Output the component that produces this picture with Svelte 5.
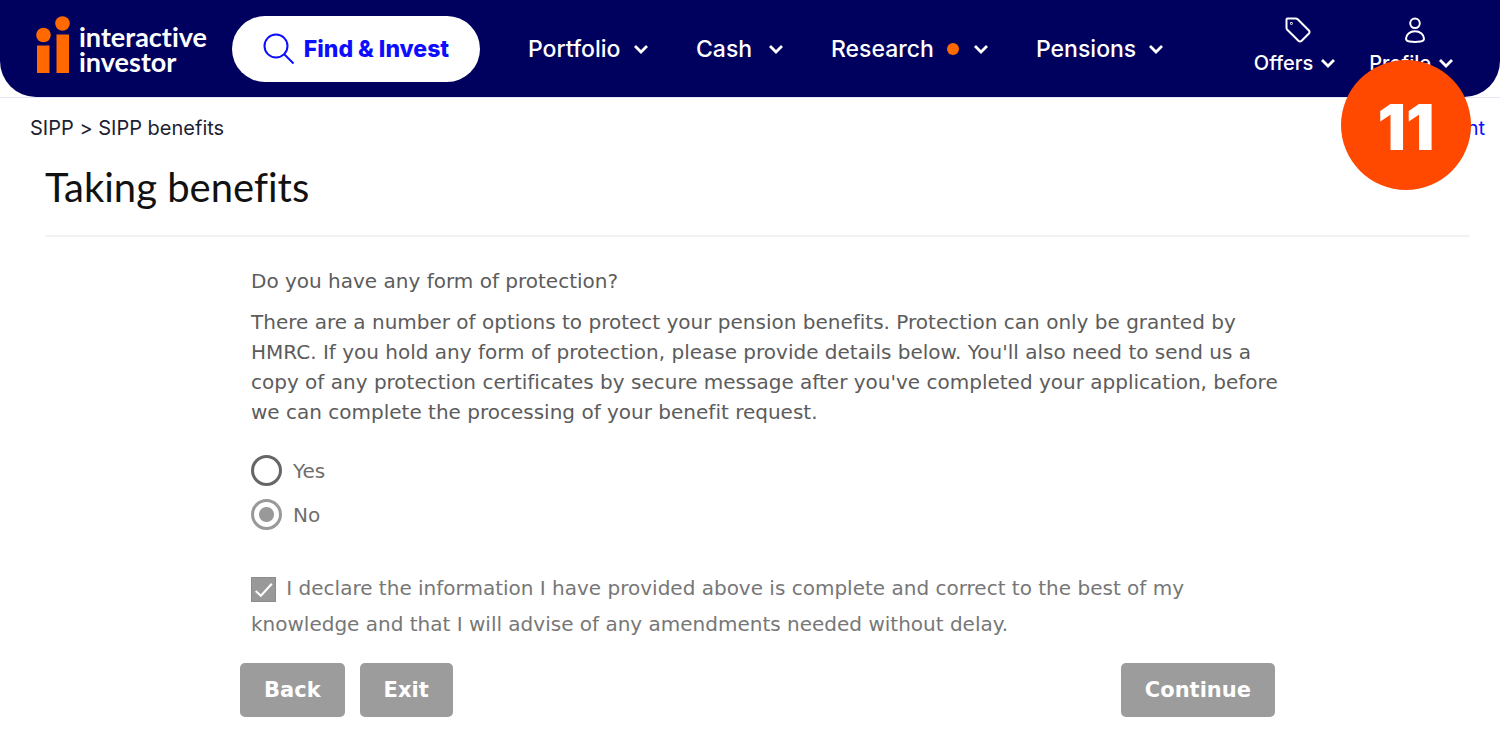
<script lang="ts">
  const menu = [
    { label: "Portfolio", isNew: false },
    { label: "Cash", isNew: false },
    { label: "Research", isNew: true },
    { label: "Pensions", isNew: false },
  ];

  let protection = $state("no");
  let declared = $state(true);
</script>

{#snippet chevron()}
  <svg class="chevron" viewBox="0 0 16 12" aria-hidden="true">
    <path d="M2 3l6 6 6-6" fill="none" stroke="currentColor" stroke-width="2.8" />
  </svg>
{/snippet}

<div class="page">
  <div class="header-wrap">
    <header class="header">
      <a class="logo" href="/" aria-label="interactive investor">
        <svg class="logo-mark" viewBox="0 0 34 58" aria-hidden="true">
          <circle cx="7.5" cy="19" r="7.3" />
          <rect x="1" y="29.5" width="12.5" height="27.5" />
          <circle cx="26.5" cy="7.5" r="7.3" />
          <rect x="20.5" y="18.5" width="12.5" height="38.5" />
        </svg>
        <span class="logo-text">interactive<br />investor</span>
      </a>

      <button class="find">
        <svg class="search" viewBox="0 0 32 32" aria-hidden="true">
          <circle cx="13" cy="13" r="11.5" />
          <path d="M21 21l9.5 9.5" />
        </svg>
        Find &amp; Invest
      </button>

      <nav class="menu">
        {#each menu as item}
          <button class="menu-item">
            <span>{item.label}</span>
            {#if item.isNew}<span class="dot"></span>{/if}
            {@render chevron()}
          </button>
        {/each}
      </nav>

      <div class="account">
        <button class="account-item">
          <svg class="account-icon" viewBox="0 0 26 26" aria-hidden="true">
            <path d="M2.5 1.5h8.2q1.2 0 2 .8l11.2 11.2q1.3 1.5 0 3l-7.2 7.3q-1.7 1.5-3.3 0L2.3 12.8q-.8-.9-.8-2V2.5q0-1 1-1z" />
            <circle cx="6.4" cy="6.4" r=".4" />
          </svg>
          <span class="account-label">Offers {@render chevron()}</span>
        </button>
        <button class="account-item">
          <svg class="account-icon" viewBox="0 0 26 26" aria-hidden="true">
            <circle cx="13" cy="6.3" r="4.8" />
            <path d="M13 14.2c5.2 0 9 3.5 9 7.3 0 2-1.3 2.8-3.5 3-3.5.5-7.5.5-11 0-2.2-.2-3.5-1-3.5-3 0-3.8 3.8-7.3 9-7.3z" />
          </svg>
          <span class="account-label">Profile {@render chevron()}</span>
        </button>
      </div>
    </header>
  </div>

  <div class="badge">11</div>

  <div class="crumbs">
    <div><a href="/sipp">SIPP</a> &gt; <a href="/sipp/benefits">SIPP benefits</a></div>
    <a class="crumb-link" href="/account">Account</a>
  </div>

  <main class="main">
    <h1>Taking benefits</h1>

    <form class="form" onsubmit={(e) => e.preventDefault()}>
      <div class="fields">
        <p class="question" id="question">Do you have any form of protection?</p>
        <p class="help">
          There are a number of options to protect your pension benefits. Protection can only be granted by<br />
          HMRC. If you hold any form of protection, please provide details below. You'll also need to send us a<br />
          copy of any protection certificates by secure message after you've completed your application, before<br />
          we can complete the processing of your benefit request.
        </p>

        <div class="options" role="radiogroup" aria-labelledby="question">
          <label class="option">
            <input type="radio" name="protection" value="yes" bind:group={protection} />
            Yes
          </label>
          <label class="option">
            <input type="radio" name="protection" value="no" bind:group={protection} />
            No
          </label>
        </div>

        <label class="declare">
          <span class="check">
            <input type="checkbox" bind:checked={declared} />
            <svg viewBox="0 0 24 24" aria-hidden="true">
              <path d="M4.5 13.5l5 4.5L20 6.5" />
            </svg>
          </span>
          I declare the information I have provided above is complete and correct to the best of my<br />
          knowledge and that I will advise of any amendments needed without delay.
        </label>
      </div>

      <div class="actions">
        <button type="button" class="btn">Back</button>
        <button type="button" class="btn">Exit</button>
        <button type="submit" class="btn next">Continue</button>
      </div>
    </form>
  </main>
</div>

<style>
  :global(body) {
    margin: 0;
    background: #fff;
  }

  .page {
    position: relative;
    font-family: Inter, "Open Sans", sans-serif;
    font-variant-ligatures: none;
  }

  button {
    border: none;
    background: transparent;
    padding: 0;
    font-family: inherit;
    color: inherit;
    cursor: pointer;
  }

  a {
    color: inherit;
    text-decoration: none;
  }

  .header-wrap {
    border-bottom: 1px solid #e6e6fb;
  }

  .header {
    display: flex;
    align-items: center;
    height: 97px;
    box-sizing: border-box;
    padding: 0 46px 0 36px;
    border-radius: 0 0 36px 36px;
    background: #00005f;
    color: #fff;
    white-space: nowrap;
  }

  .logo {
    display: flex;
    align-items: flex-end;
    gap: 9px;
    width: 196px;
    padding-bottom: 7px;
  }

  .logo-mark {
    width: 34px;
    height: 58px;
    fill: #ff6900;
  }

  .logo-text {
    font-family: Lato, sans-serif;
    font-size: 27px;
    font-weight: 700;
    line-height: 25px;
  }

  .find {
    display: flex;
    align-items: center;
    justify-content: center;
    gap: 9px;
    width: 248px;
    height: 66px;
    border-radius: 33px;
    background: #fff;
    color: #0d0dff;
    font-size: 23px;
    font-weight: 800;
  }

  .search {
    width: 32px;
    height: 32px;
    fill: none;
    stroke: #0d0dff;
    stroke-width: 2;
  }

  .menu {
    display: grid;
    grid-template-columns: 121px 88px 158px 128px;
    gap: 47px;
    margin-left: 48px;
  }

  .menu-item {
    display: flex;
    align-items: center;
    justify-content: space-between;
    font-size: 23px;
    font-weight: 500;
    line-height: 32px;
  }

  .dot {
    width: 12px;
    height: 12px;
    border-radius: 50%;
    background: #ff6900;
  }

  .chevron {
    width: 16px;
    height: 12px;
  }

  .account {
    display: flex;
    gap: 33px;
    margin-left: auto;
    padding-bottom: 5px;
  }

  .account-item {
    display: flex;
    flex-direction: column;
    align-items: center;
    gap: 8px;
  }

  .account-icon {
    width: 26px;
    height: 26px;
    padding-left: 6px;
    fill: none;
    stroke: currentColor;
    stroke-width: 2;
  }

  .account-label {
    display: flex;
    align-items: center;
    gap: 7px;
    font-size: 20px;
    font-weight: 500;
    line-height: 24px;
  }

  .badge {
    position: absolute;
    top: 60px;
    right: 29px;
    width: 130px;
    height: 130px;
    border-radius: 50%;
    background: #ff4800;
    color: #fff;
    font-size: 63px;
    font-weight: 900;
    line-height: 134px;
    text-align: center;
  }

  .crumbs {
    display: flex;
    justify-content: space-between;
    padding: 15px 15px 0 30px;
    color: #1c2233;
    font-size: 20px;
    line-height: 30px;
  }

  .crumb-link {
    color: #0d0dff;
  }

  .main {
    padding: 19px 30px 0 45px;
  }

  h1 {
    margin: 0;
    padding-bottom: 23px;
    border-bottom: 2px solid #f2f2f2;
    color: #111;
    font-family: Lato, sans-serif;
    font-size: 40px;
    font-weight: 400;
    line-height: 50px;
  }

  .form {
    max-width: 1035px;
    margin: 0 auto;
    padding-top: 29px;
    color: #5c5c5c;
    font-family: "DejaVu Sans", Verdana, sans-serif;
    font-size: 20px;
    line-height: 30px;
  }

  .fields {
    padding: 0 11px;
  }

  .question {
    margin: 0 0 11px;
  }

  .help {
    margin: 0;
    white-space: nowrap;
  }

  .options {
    display: flex;
    flex-direction: column;
    gap: 13px;
    margin-top: 28px;
    color: #6e6e6e;
  }

  .option {
    display: flex;
    align-items: center;
    gap: 11px;
    width: fit-content;
  }

  input {
    appearance: none;
    box-sizing: border-box;
    margin: 0;
    cursor: pointer;
  }

  .option input {
    width: 31px;
    height: 31px;
    border: 3px solid #666;
    border-radius: 50%;
  }

  .option input:checked {
    border-color: #999;
    background: radial-gradient(circle, #999 7px, #fff 8px);
  }

  .declare {
    display: block;
    margin-top: 40px;
    color: #777;
    line-height: 36px;
    white-space: nowrap;
  }

  .check {
    display: inline-grid;
    margin-right: 4px;
    vertical-align: middle;
  }

  .check input,
  .check svg {
    grid-area: 1 / 1;
    width: 25px;
    height: 25px;
  }

  .check input {
    border: 1px solid #8c8c8c;
  }

  .check input:checked {
    background: #999;
  }

  .check svg {
    fill: none;
    stroke: #fff;
    stroke-width: 2;
    pointer-events: none;
  }

  .actions {
    display: flex;
    gap: 15px;
    padding: 21px 0 33px;
  }

  .btn {
    height: 54px;
    padding: 0 24px;
    border-radius: 5px;
    background: #9c9c9c;
    color: #fff;
    font-size: 21px;
    font-weight: 700;
  }

  .next {
    margin-left: auto;
  }
</style>
